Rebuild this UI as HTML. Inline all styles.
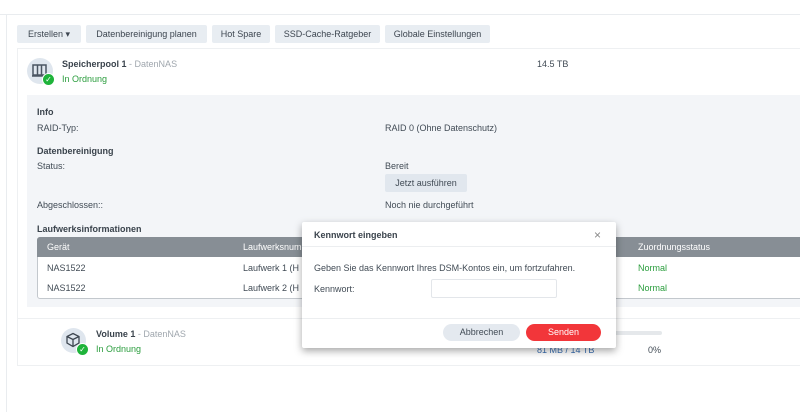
<!DOCTYPE html><html><head><style>
body{margin:0;width:800px;height:412px;background:#fff;font-family:"Liberation Sans",sans-serif;font-size:9px;color:#414b55;position:relative;overflow:hidden}
.a{position:absolute;white-space:nowrap}
.btn{position:absolute;top:25px;height:18px;background:#e8edf2;line-height:18px;text-align:center;font-size:9px;color:#3d4650;border-radius:2px}
b{color:#3a434c}
.g{color:#2a9d3d}
.gray{color:#a0a7ae}
</style></head><body>
<div class="a" style="left:0;top:14px;width:800px;height:1px;background:#e9ecef"></div>
<div class="a" style="left:6px;top:15px;width:1px;height:397px;background:#e9ecef"></div>
<div class="btn" style="left:17px;width:64px">Erstellen ▾</div>
<div class="btn" style="left:86px;width:121px">Datenbereinigung planen</div>
<div class="btn" style="left:212px;width:58px">Hot Spare</div>
<div class="btn" style="left:275px;width:105px">SSD-Cache-Ratgeber</div>
<div class="btn" style="left:385px;width:105px">Globale Einstellungen</div>
<div class="a" style="left:17px;top:48px;width:790px;height:316px;border:1px solid #eef0f2"></div>
<div class="a" style="left:17px;top:318px;width:790px;height:1px;background:#eef0f2"></div>
<div class="a" style="left:27px;top:58px;width:26px;height:26px;border-radius:50%;background:#dfe6ee"></div>
<svg class="a" style="left:32px;top:63px" width="16" height="16" viewBox="0 0 16 16"><rect x="1" y="2" width="13" height="10" fill="none" stroke="#4a5562" stroke-width="1.5"/><path d="M5.5 2v10M9.5 2v10M0 13h15" stroke="#4a5562" stroke-width="1.5"/></svg>
<div class="a" style="left:42px;top:73px;width:11px;height:11px;border-radius:50%;background:#1eb33a;border:1px solid #fff;color:#fff;font-size:8px;line-height:11px;text-align:center">✓</div>
<div class="a" style="left:62px;top:59px"><b>Speicherpool 1</b> <span class="gray">- DatenNAS</span></div>
<div class="a g" style="left:62px;top:74px">In Ordnung</div>
<div class="a" style="left:537px;top:59px">14.5 TB</div>
<div class="a" style="left:27px;top:95px;width:780px;height:212px;background:#f3f5f8"></div>
<div class="a" style="left:37px;top:107px"><b>Info</b></div>
<div class="a" style="left:37px;top:123px">RAID-Typ:</div>
<div class="a" style="left:385px;top:123px">RAID 0 (Ohne Datenschutz)</div>
<div class="a" style="left:37px;top:146px"><b>Datenbereinigung</b></div>
<div class="a" style="left:37px;top:161px">Status:</div>
<div class="a" style="left:385px;top:161px">Bereit</div>
<div class="a" style="left:385px;top:174px;width:82px;height:18px;background:#e1e7ee;line-height:18px;text-align:center;border-radius:2px">Jetzt ausführen</div>
<div class="a" style="left:37px;top:200px">Abgeschlossen::</div>
<div class="a" style="left:385px;top:200px">Noch nie durchgeführt</div>
<div class="a" style="left:37px;top:224px"><b>Laufwerksinformationen</b></div>
<div class="a" style="left:37px;top:237px;width:770px;height:60px;background:#fff;border:1px solid #c3c8cd;border-radius:3px"></div>
<div class="a" style="left:37px;top:237px;width:771px;height:20px;background:#878e95;border-radius:3px 3px 0 0"></div>
<div class="a" style="left:47px;top:242px;color:#fff">Gerät</div>
<div class="a" style="left:243px;top:242px;color:#fff">Laufwerksnum</div>
<div class="a" style="left:638px;top:242px;color:#fff">Zuordnungsstatus</div>
<div class="a" style="left:47px;top:263px">NAS1522</div><div class="a" style="left:243px;top:263px">Laufwerk 1 (H</div><div class="a g" style="left:638px;top:263px">Normal</div>
<div class="a" style="left:47px;top:283px">NAS1522</div><div class="a" style="left:243px;top:283px">Laufwerk 2 (H</div><div class="a g" style="left:638px;top:283px">Normal</div>
<div class="a" style="left:61px;top:328px;width:25px;height:25px;border-radius:50%;background:#dfe6ee"></div>
<svg class="a" style="left:65px;top:332px" width="16" height="16" viewBox="0 0 16 16"><path d="M8 1.5L14 4.5V11L8 14.5L2 11V4.5Z M2 4.5L8 7.5L14 4.5 M8 7.5V14.5" fill="none" stroke="#3d4650" stroke-width="1.3"/></svg>
<div class="a" style="left:76px;top:343px;width:11px;height:11px;border-radius:50%;background:#1eb33a;border:1px solid #fff;color:#fff;font-size:8px;line-height:11px;text-align:center">✓</div>
<div class="a" style="left:96px;top:329px"><b>Volume 1</b> <span class="gray">- DatenNAS</span></div>
<div class="a g" style="left:96px;top:344px">In Ordnung</div>
<div class="a" style="left:600px;top:331px;width:62px;height:4px;background:#e5e8eb;border-radius:2px"></div>
<div class="a" style="left:537px;top:345px;color:#3b6fb0">81 MB / 14 TB</div>
<div class="a" style="left:648px;top:345px">0%</div>
<div class="a" style="left:302px;top:222px;width:314px;height:126px;background:#fff;box-shadow:0 3px 8px rgba(0,0,0,.35);border-radius:2px">
<div class="a" style="left:12px;top:8px"><b>Kennwort eingeben</b></div>
<div class="a" style="left:292px;top:6px;font-size:12px;color:#888">×</div>
<div class="a" style="left:0;top:24px;width:314px;height:1px;background:#eceef0"></div>
<div class="a" style="left:12px;top:41px">Geben Sie das Kennwort Ihres DSM-Kontos ein, um fortzufahren.</div>
<div class="a" style="left:12px;top:62px">Kennwort:</div>
<div class="a" style="left:129px;top:57px;width:124px;height:17px;border:1px solid #e3e6ea;border-radius:2px"></div>
<div class="a" style="left:0;top:96px;width:314px;height:1px;background:#eceef0"></div>
<div class="a" style="left:141px;top:102px;width:77px;height:17px;background:#e4e9ef;border-radius:9px;line-height:17px;text-align:center">Abbrechen</div>
<div class="a" style="left:224px;top:102px;width:75px;height:17px;background:#f2363a;border-radius:9px;line-height:17px;text-align:center;color:#fff">Senden</div>
</div>
</body></html>
